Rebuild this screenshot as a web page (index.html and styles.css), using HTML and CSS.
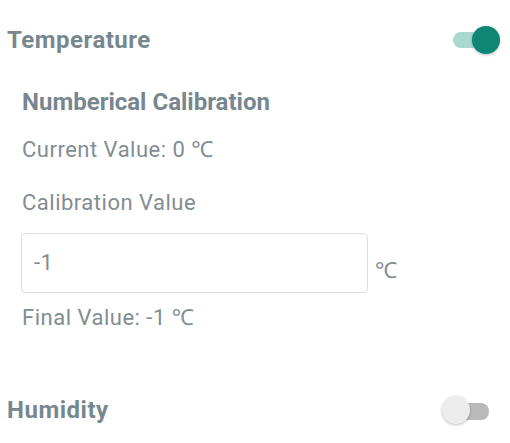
FILE: index.html
```html
<!DOCTYPE html>
<html>
<head>
<meta charset="utf-8">
<link rel="stylesheet" href="styles.css">
</head>
<body>
<div class="page">
  <div class="header">
    <div class="title">Temperature</div>
    <div class="toggle on"><div class="track"></div><div class="thumb"></div></div>
  </div>
  <div class="section">
    <div class="subtitle">Numberical Calibration</div>
    <div class="text current">Current Value: 0 ℃</div>
    <div class="text label">Calibration Value</div>
    <div class="input-row">
      <div class="input">-1</div>
      <div class="unit">℃</div>
    </div>
    <div class="text final">Final Value: -1 ℃</div>
  </div>
  <div class="header humidity">
    <div class="title">Humidity</div>
    <div class="toggle off"><div class="track"></div><div class="thumb"></div></div>
  </div>
</div>
</body>
</html>
```
FILE: styles.css
```css
html, body {
  margin: 0;
  padding: 0;
  background: #ffffff;
}
body {
  font-family: Roboto, "Noto Sans", "DejaVu Sans", sans-serif;
  color: #7f8a90;
}
.page {
  width: 510px;
  height: 443px;
  overflow: hidden;
}
.header {
  display: flex;
  align-items: center;
  justify-content: space-between;
  height: 40px;
  margin-top: 20px;
  padding-left: 7px;
  padding-right: 10px;
}
.header.humidity {
  margin-top: 57px;
}
.title {
  font-size: 24px;
  font-weight: 700;
  letter-spacing: 0.5px;
  color: #77878f;
  line-height: 40px;
}
.section {
  padding-left: 22px;
}
.subtitle {
  margin-top: 27px;
  font-size: 24px;
  font-weight: 700;
  color: #77878f;
  line-height: 30px;
}
.text {
  font-size: 22px;
  letter-spacing: 0.5px;
  line-height: 30px;
  color: #828d92;
}
.current { margin-top: 18px; }
.label { margin-top: 23px; }
.final { margin-top: 10px; }
.input-row {
  display: flex;
  align-items: flex-end;
  margin-top: 15px;
  margin-left: -1px;
}
.input {
  box-sizing: border-box;
  width: 347px;
  height: 60px;
  border: 1px solid #dcdfe1;
  border-radius: 4px;
  padding: 14px 12px 0;
  font-size: 22px;
  letter-spacing: 0.5px;
  line-height: 30px;
  color: #828d92;
}
.unit {
  margin-left: 7px;
  margin-bottom: 10px;
  font-size: 22px;
  line-height: 24px;
  color: #828d92;
}
.toggle {
  position: relative;
  width: 47px;
  height: 30px;
}
.toggle .track {
  position: absolute;
  top: 7px;
  height: 16px;
  border-radius: 8px;
}
.toggle .thumb {
  position: absolute;
  top: 1px;
  width: 28px;
  height: 28px;
  border-radius: 50%;
  box-shadow: 0 1px 3px rgba(0,0,0,0.25);
}
.toggle.on .track {
  left: 0;
  width: 38px;
  background: #a9d9d0;
}
.toggle.on .thumb {
  right: 0;
  background: #0f8675;
}
.toggle.off {
  margin-right: 11px;
}
.toggle.off .track {
  right: 0;
  width: 36px;
  background: #b9b9b9;
  top: 8px;
  height: 17px;
}
.toggle.off .thumb {
  left: 0;
  background: #ececec;
}
```
